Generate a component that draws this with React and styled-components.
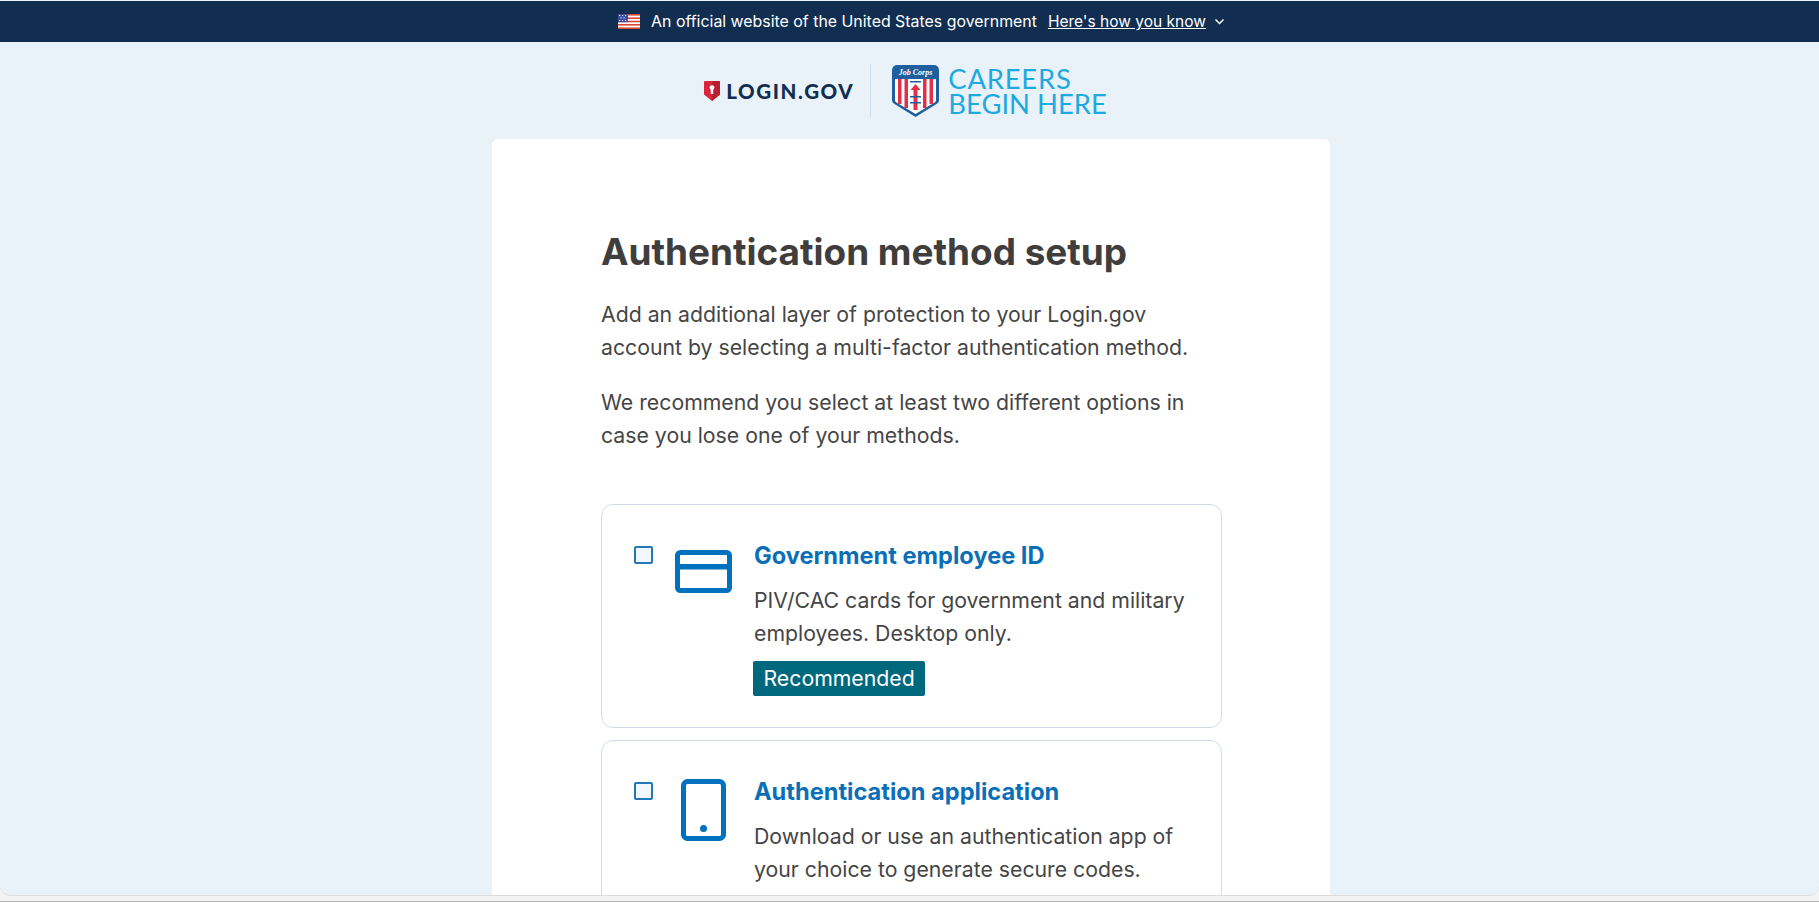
import styled, { createGlobalStyle } from "styled-components";

const GlobalStyle = createGlobalStyle`
  html, body {
    margin: 0;
    padding: 0;
    height: 902px;
    overflow: hidden;
    background: #f3f3f3;
    font-family: "Inter", "Liberation Sans", sans-serif;
  }
`;

const FlagIcon = () => (
  <svg width="22" height="15" viewBox="0 0 22 15" aria-hidden="true">
    <rect width="22" height="15" fill="#fff" />
    <rect width="22" height="1.6" fill="#d9482f" />
    <rect y="3.4" width="22" height="1.6" fill="#d9482f" />
    <rect y="6.7" width="22" height="1.6" fill="#d9482f" />
    <rect y="10" width="22" height="1.6" fill="#d9482f" />
    <rect y="13.4" width="22" height="1.6" fill="#d9482f" />
    <rect width="10" height="8.2" fill="#3f4fa8" />
    <g fill="#e4e6f5">
      <rect x="1" y="1" width="1.2" height="1" />
      <rect x="4" y="1" width="1.2" height="1" />
      <rect x="7" y="1" width="1.2" height="1" />
      <rect x="2.5" y="3.4" width="1.2" height="1" />
      <rect x="5.5" y="3.4" width="1.2" height="1" />
      <rect x="1" y="6" width="1.2" height="1" />
      <rect x="4" y="6" width="1.2" height="1" />
      <rect x="7" y="6" width="1.2" height="1" />
    </g>
  </svg>
);

const ShieldIcon = () => (
  <svg width="16" height="20" viewBox="0 0 16 20" aria-hidden="true">
    <path d="M1 0h14a1 1 0 0 1 1 1v12.5L8 20 0 13.5V1a1 1 0 0 1 1-1z" fill="#d9243d" />
    <path d="M16 1v12.5L8 20v-20h7a1 1 0 0 1 1 1z" fill="#b81f33" />
    <circle cx="8" cy="6.6" r="2.4" fill="#fff" />
    <rect x="6.8" y="7" width="2.4" height="6" fill="#fff" />
  </svg>
);

const JobCorpsBadge = () => (
  <svg width="47" height="52" viewBox="0 0 47 52" aria-hidden="true">
    <path d="M5 0h37a5 5 0 0 1 5 5v30c0 2-1 3-2.500 4L23.500 52 2.500 39C1 38 0 37 0 35V5a5 5 0 0 1 5-5z" fill="#1f5f9e" />
    <path d="M3 14h41v21c0 1-.5 2-1.500 2.500L23.500 49 4.500 37.500C3.500 37 3 36 3 35z" fill="#fff" />
    <g fill="#e2304a">
      <rect x="6" y="14" width="3.500" height="25" />
      <rect x="12.500" y="14" width="3.500" height="29" />
      <rect x="31" y="14" width="3.500" height="29" />
      <rect x="37.500" y="14" width="3.500" height="25" />
      <path d="M23.500 19l5 6h-3v20h-4V25h-3z" />
    </g>
    <g fill="#1f5f9e">
      <rect x="18" y="16" width="11" height="1.500" />
      <rect x="18" y="31" width="11" height="1.500" />
      <rect x="18" y="37" width="11" height="1.500" />
    </g>
    <text x="23.500" y="10" textAnchor="middle" fontSize="8" fontStyle="italic" fontWeight="700" fontFamily="Liberation Serif, serif" fill="#fff">Job Corps</text>
  </svg>
);

const CardIcon = () => (
  <svg width="57" height="43" viewBox="0 0 57 43" aria-hidden="true">
    <rect x="2.500" y="2.500" width="52" height="38" rx="3" fill="none" stroke="#0071bc" strokeWidth="5" />
    <rect x="2" y="14" width="53" height="5.500" fill="#0071bc" />
  </svg>
);

const PhoneIcon = () => (
  <svg width="45" height="62" viewBox="0 0 45 62" aria-hidden="true">
    <rect x="2.500" y="2.500" width="40" height="57" rx="4" fill="none" stroke="#0071bc" strokeWidth="5" />
    <circle cx="22.500" cy="49.500" r="3.500" fill="#0071bc" />
  </svg>
);

const Chevron = () => (
  <svg width="11" height="7" viewBox="0 0 11 7" aria-hidden="true">
    <path d="M1.500 1.500l4 4 4-4" fill="none" stroke="#fff" strokeWidth="1.500" />
  </svg>
);

const methods = [
  {
    title: "Government employee ID",
    text: ["PIV/CAC cards for government and military", "employees. Desktop only."],
    badge: "Recommended",
    icon: <CardIcon />,
    iconTop: 8,
  },
  {
    title: "Authentication application",
    text: ["Download or use an authentication app of", "your choice to generate secure codes."],
    icon: <PhoneIcon />,
    iconTop: 1,
  },
];

export default function App() {
  return (
    <>
      <GlobalStyle />
      <Screen>
        <Banner>
          <FlagIcon />
          <BannerText>An official website of the United States government</BannerText>
          <BannerLink href="#">Here's how you know</BannerLink>
          <Chevron />
        </Banner>
        <Logos>
          <LoginLogo>
            <ShieldIcon />
            <LoginWord>LOGIN.GOV</LoginWord>
          </LoginLogo>
          <Divider />
          <PartnerLogo>
            <JobCorpsBadge />
            <PartnerWord>
              <CareersLine>CAREERS</CareersLine>
              <br />
              BEGIN HERE
            </PartnerWord>
          </PartnerLogo>
        </Logos>
        <Panel>
          <Heading>Authentication method setup</Heading>
          <Lead>
            Add an additional layer of protection to your Login.gov
            <br />
            account by selecting a multi-factor authentication method.
          </Lead>
          <Lead>
            We recommend you select at least two different options in
            <br />
            case you lose one of your methods.
          </Lead>
          <MethodList>
            {methods.map((m) => (
              <Method key={m.title}>
                <CheckBox />
                <MethodIcon $top={m.iconTop}>{m.icon}</MethodIcon>
                <MethodBody>
                  <MethodTitle>{m.title}</MethodTitle>
                  <MethodText>
                    {m.text[0]}
                    <br />
                    {m.text[1]}
                  </MethodText>
                  {m.badge && <Badge>{m.badge}</Badge>}
                </MethodBody>
              </Method>
            ))}
          </MethodList>
        </Panel>
      </Screen>
      <WindowEdge />
    </>
  );
}

const Screen = styled.div`
  height: 896px;
  overflow: hidden;
  padding-top: 1px;
  box-sizing: border-box;
  background: #e9f1f9;
  border-bottom: 1px solid #dcdcdc;
  border-radius: 0 0 10px 10px;
`;

const WindowEdge = styled.div`
  height: 1px;
  margin-top: 5px;
  background: #b4b4b4;
`;

const Banner = styled.div`
  height: 41px;
  padding-left: 24px;
  background: #112e51;
  color: #fff;
  font-size: 15.900px;
  display: flex;
  align-items: center;
  justify-content: center;
`;

const BannerText = styled.span`
  margin-left: 11px;
`;

const BannerLink = styled.a`
  color: #fff;
  font-size: 15.500px;
  margin: 0 8px 0 11px;
`;

const Logos = styled.div`
  height: 97px;
  padding-right: 8px;
  display: flex;
  align-items: center;
  justify-content: center;
`;

const LoginLogo = styled.div`
  display: flex;
  align-items: center;
  gap: 6px;
`;

const LoginWord = styled.span`
  font-family: "Lato", sans-serif;
  font-weight: 900;
  font-size: 20.500px;
  letter-spacing: 1.600px;
  color: #112e51;
`;

const Divider = styled.div`
  width: 1px;
  height: 54px;
  margin: 0 21px 0 16px;
  background: #cfdeeb;
`;

const PartnerLogo = styled.div`
  display: flex;
  align-items: center;
  gap: 9px;
`;

const PartnerWord = styled.div`
  font-family: "Lato", sans-serif;
  font-size: 27.400px;
  line-height: 25px;
  color: #1ea9e1;
`;

const CareersLine = styled.span`
  letter-spacing: 0.800px;
`;

const Panel = styled.main`
  position: relative;
  left: 1.500px;
  width: 838px;
  box-sizing: border-box;
  margin: 0 auto;
  padding: 90px 108px 0 109px;
  background: #fff;
  border-radius: 6px 6px 0 0;
  color: #454545;
`;

const Heading = styled.h1`
  margin: 0 0 23px;
  font-size: 36.900px;
  line-height: 46px;
  font-weight: 700;
  color: #403d3d;
`;

const Lead = styled.p`
  margin: 0 0 22px;
  font-size: 21.250px;
  line-height: 33px;
`;

const MethodList = styled.div`
  margin-top: 52px;
  display: flex;
  flex-direction: column;
  gap: 12px;
`;

const Method = styled.div`
  box-sizing: border-box;
  height: 224px;
  padding: 37px 32px 0;
  display: flex;
  border: 1px solid #d0dcea;
  border-radius: 12px;
`;

const CheckBox = styled.span`
  flex: none;
  box-sizing: border-box;
  width: 19px;
  height: 18px;
  margin-top: 4px;
  background: #f0f7fd;
  border: 2px solid #2378b9;
  border-radius: 2px;
`;

const MethodIcon = styled.div`
  flex: none;
  width: 101px;
  margin-top: ${(p) => p.$top}px;
  display: flex;
  justify-content: center;
`;

const MethodBody = styled.div`
  flex: 1;
  white-space: nowrap;
`;

const MethodTitle = styled.div`
  margin-bottom: 14px;
  font-size: 23.600px;
  line-height: 28px;
  font-weight: 700;
  color: #0b6fb8;
`;

const MethodText = styled.div`
  font-size: 21.250px;
  line-height: 33px;
`;

const Badge = styled.div`
  width: fit-content;
  margin: 11px 0 0 -1px;
  padding: 0 10.500px;
  height: 35px;
  line-height: 35px;
  font-size: 21.250px;
  background: #00687d;
  color: #fff;
  border-radius: 2px;
`;
